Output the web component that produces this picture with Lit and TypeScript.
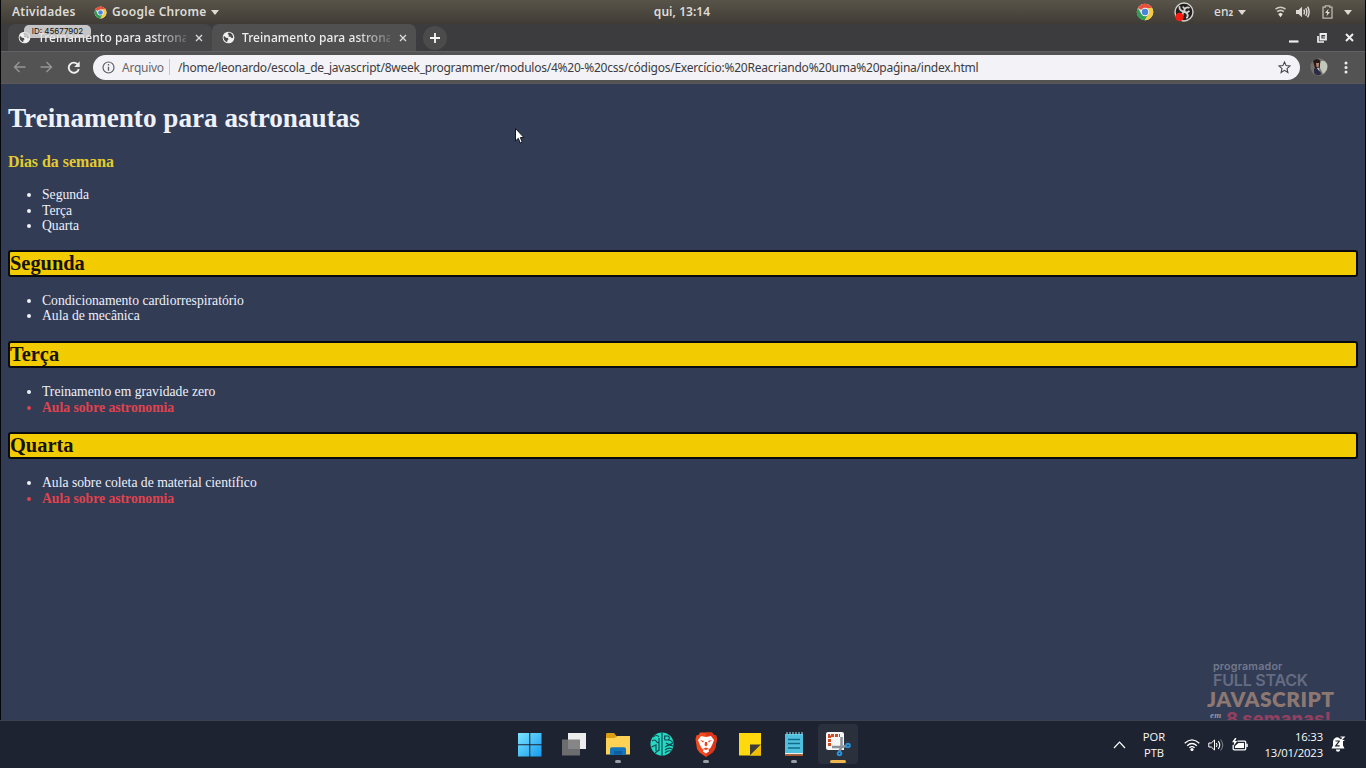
import { LitElement, html, css, svg } from "lit";
import { customElement } from "lit/decorators.js";

const chromeLogo = html`<svg viewBox="0 0 24 24" width="100%" height="100%">
  <circle cx="12" cy="12" r="11" fill="#e4e0d8"/>
  <path d="M12 12 2.5 6.5A11 11 0 0 1 21.5 6.5L12 6.5Z" fill="#e8503c"/>
  <path d="M2.5 6.5A11 11 0 0 0 11.5 23L16.8 14.8 12 12 7.2 14.8Z" fill="#2f9e57"/>
  <path d="M21.5 6.5A11 11 0 0 1 11.5 23L16.8 14.8 12 6.5Z" fill="#f5cb42"/>
  <circle cx="12" cy="12" r="5.6" fill="#f4f4f4"/><circle cx="12" cy="12" r="4.3" fill="#4a84d8"/></svg>`;

const globe = html`<svg viewBox="0 0 14 14" width="13" height="13">
  <circle cx="7" cy="7" r="6.3" fill="#f0f0f0"/>
  <path d="M2 5.2 4.4 7.3 6.4 7.6 7 9 5.8 10.2 5.6 12.2A5.5 5.5 0 0 1 2 5.2ZM7.3 1.6 6 3.2 7.6 4.4 6.8 5.8 9 6.2 10.6 7.8 12 7.2A5.2 5.2 0 0 0 7.3 1.6Z" fill="#4b4b4c"/></svg>`;

const cross = html`<svg viewBox="0 0 8 8" width="8" height="8"><path d="M1 1 7 7M7 1 1 7" stroke="#dcdcdc" stroke-width="1.3"/></svg>`;

const caret = html`<svg viewBox="0 0 8 5" width="8" height="5"><path d="M0 0H8L4 5Z" fill="#dedad3"/></svg>`;

@customElement("desktop-bar")
class DesktopBar extends LitElement {
  static styles = css`
    :host { display: grid; grid-template-columns: 1fr auto 1fr; height: 24px; align-items: center; box-sizing: border-box; padding: 0 13px 1px 11px;
      background: linear-gradient(#59544a, #3f3c36); color: #dedbd5; font: 600 12px/22px "Noto Sans", sans-serif; white-space: nowrap; }
    .left, .right { display: flex; align-items: center; }
    .right { justify-content: flex-end; }
    .act { width: 82px; letter-spacing: 0.25px; }
    .app { width: 99px; margin-left: 5px; letter-spacing: 0.3px; }
    .logo { display: flex; width: 13px; height: 13px; }
    .big { width: 18px; height: 18px; margin-right: 20px; }
    .clock { letter-spacing: 0.05px; }
    .obs { margin-right: 20px; }
    .lang { width: 24px; font-weight: 500; padding-top: 1px; }
    .sub { font-size: 8px; font-weight: 700; }
    .net { margin-left: 29px; }
    .vol { margin-left: 10px; }
    .bat { margin: 0 11px 0 12px; }
    svg { display: block; flex: none; }
  `;
  render() {
    return html`
      <div class="left"><span class="act">Atividades</span><span class="logo">${chromeLogo}</span><span class="app">Google Chrome</span>${caret}</div>
      <span class="clock">qui, 13:14</span>
      <div class="right">
        <span class="logo big">${chromeLogo}</span>
        <svg class="obs" width="20" height="20" viewBox="0 0 20 20"><circle cx="10" cy="10" r="9" fill="#211f20" stroke="#d5d2ce" stroke-width="1.4"/>
          <path d="M5.4 4.2C5 8 8 9.5 10.2 9.4 11.2 7.4 10.3 5.4 8.6 4.8M15.5 6.1C13 4.4 9.8 6.5 10.3 9.4 12 11 14.2 10.5 15.4 8.7M12.3 16.2C15.3 13.8 13.2 10.5 10.3 9.9 8.5 10.5 8 12.4 8.8 14" stroke="#d5d2ce" stroke-width="1.8" fill="none"/>
          <circle cx="5.5" cy="15" r="4.2" fill="#f51c12"/></svg>
        <span class="lang">en<span class="sub">2</span></span>${caret}
        <svg class="net" width="11" height="12" viewBox="0 0 11 12"><path d="M.5 3.2Q5.5-.8 10.5 3.2M2.2 5.7Q5.5 3 8.8 5.7" stroke="#cfcbc3" stroke-width="1.6" fill="none"/><path d="M3.2 8 5.5 6.8 7.8 8 5.5 11.3Z" fill="#ece8e0"/></svg>
        <svg class="vol" width="14" height="12" viewBox="0 0 14 12"><path d="M0 4H2.5L6 .8V11.2L2.5 8H0Z" fill="#dedad3"/><path d="M7.8 3.7Q9.2 6 7.8 8.3M9.7 2.2Q12 6 9.7 9.8M11.6.7Q14.7 6 11.6 11.3" stroke="#dedad3" stroke-width="1.4" fill="none"/></svg>
        <svg class="bat" width="11" height="14" viewBox="0 0 11 14"><path d="M1 2.2H3.3V.8H7.7V2.2H10V13.2H1Z" stroke="#bdb9b1" stroke-width="1.3" fill="none"/><path d="M6.5 3.8 3 8H5.2L4.5 11.2 8 7H5.8Z" fill="#dedad3"/></svg>
        ${caret}
      </div>`;
  }
}

@customElement("browser-chrome")
class BrowserChrome extends LitElement {
  static styles = css`
    :host { display: block; font: 12px/18px "Noto Sans", sans-serif; white-space: nowrap; }
    .strip { height: 27px; box-sizing: border-box; display: flex; padding: 0 11px 0 7px; background: #3c3b3d; align-items: center; }
    .tab { display: flex; align-items: center; width: 204px; height: 27px; box-sizing: border-box; padding: 0 9px 0 10px; border-radius: 7px 7px 0 0; background: #464648; }
    .tab.on { background: #505051; }
    .label { flex: none; width: 148px; margin: 0 9px 0 7px; overflow: hidden; color: #eeeeee; font-weight: 500; letter-spacing: 0.06px;
      -webkit-mask-image: linear-gradient(90deg, #000 78%, #0003 100%); mask-image: linear-gradient(90deg, #000 78%, #0003 100%); }
    .tab svg { flex: none; }
    .plus { display: flex; align-items: center; justify-content: center; width: 24px; height: 24px; border-radius: 50%; background: #4b4b4c; margin-left: 7px; }
    .controls { display: flex; align-items: center; margin-left: auto; gap: 18px; }
    .tools { height: 33px; box-sizing: border-box; display: flex; align-items: center; padding: 0 13px 1px 12px; background: #535354; border-top: 1px solid #626263; border-bottom: 1px solid #5b5a58; }
    .nav { display: flex; gap: 14px; width: 80px; flex: none; align-items: center; }
    .pill { flex: none; display: flex; align-items: center; box-sizing: border-box; width: 1207px; height: 25px; border-radius: 13px; background: #f3f2f6; padding: 0 9px; color: #3c3c40; }
    .kind { width: 47px; margin-left: 7px; padding-top: 1px; color: #666669; letter-spacing: -0.25px; }
    .rule { width: 1px; height: 16px; background: #c7c7ca; margin-right: 8px; }
    .url { padding-top: 1px; letter-spacing: -0.238px; }
    .star { margin-left: auto; }
    .avatar { margin-left: 10px; }
    .more { margin-left: 16px; }
  `;
  render() {
    const label = "Treinamento para astronautas";
    return html`
      <div class="strip">
        <div class="tab">${globe}<span class="label">${label}</span>${cross}</div>
        <div class="tab on">${globe}<span class="label">${label}</span>${cross}</div>
        <span class="plus"><svg width="10" height="10"><path d="M5 0V10M0 5H10" stroke="#f5f5f5" stroke-width="1.8"/></svg></span>
        <div class="controls">
          <svg width="10" height="10"><path d="M0 8.5H9.5" stroke="#eee" stroke-width="2.2"/></svg>
          <svg width="10" height="10"><path d="M1 3V9H7" stroke="#eee" stroke-width="1.7" fill="none"/><path d="M3.5 1H9V6.5H3.5Z" stroke="#eee" stroke-width="1.8" fill="none"/><path d="M5.5 3H8V5H5.5Z" fill="#999"/></svg>
          <svg width="9" height="9"><path d="M1 1 8 8M8 1 1 8" stroke="#eee" stroke-width="2"/></svg>
        </div>
      </div>
      <div class="tools">
        <div class="nav">
          <svg width="13" height="12"><path d="M12.5 6H1.5M6.5 1 1.5 6 6.5 11" stroke="#969697" stroke-width="1.4" fill="none"/></svg>
          <svg width="13" height="12"><path d="M.5 6H11.5M6.5 1 11.5 6 6.5 11" stroke="#969697" stroke-width="1.4" fill="none"/></svg>
          <svg width="13" height="13"><path d="M11 3.7A5.1 5.1 0 1 0 11.8 8" stroke="#efefef" stroke-width="1.9" fill="none"/><path d="M12.7.3V6H7.2Z" fill="#efefef"/></svg>
        </div>
        <div class="pill">
          <svg width="13" height="13" viewBox="0 0 13 13"><circle cx="6.5" cy="6.5" r="5.5" fill="none" stroke="#5f5f63" stroke-width="1.2"/><path d="M6.5 5.8V9.8M6.5 3.1V4.6" stroke="#5f5f63" stroke-width="1.3"/></svg>
          <span class="kind">Arquivo</span><span class="rule"></span>
          <span class="url">/home/leonardo/escola_de_javascript/8week_programmer/modulos/4%20-%20css/códigos/Exercício:%20Reacriando%20uma%20paǵina/index.html</span>
          <svg class="star" width="13" height="13" viewBox="0 0 13 13"><path d="M6.5 1 8.1 4.6 12 5 9 7.6 9.9 11.5 6.5 9.4 3.1 11.5 4 7.6 1 5 4.9 4.6Z" fill="none" stroke="#444448" stroke-width="1.1"/></svg>
        </div>
        <svg class="avatar" width="18" height="18" viewBox="0 0 18 18"><circle cx="9" cy="9" r="8.7" fill="#77706a"/><path d="M10 3Q15 1.5 17 6 18.5 12 13 16L10 10Z" fill="#c3c8bd"/><path d="M3 3Q7-1 10.5 3L9.5 10 5 10Z" fill="#241a19"/><path d="M6 5H9.2L8.6 9H6.5Z" fill="#b3836c"/><path d="M4 10.5 7.2 9.5 11.5 16Q7 19 4 15Z" fill="#282d45"/><path d="M7 10 8.3 9.5 9.7 13.5Z" fill="#e7e8f1"/></svg>
        <svg class="more" width="4" height="13"><circle cx="2" cy="2" r="1.5" fill="#eee"/><circle cx="2" cy="6.5" r="1.5" fill="#eee"/><circle cx="2" cy="11" r="1.5" fill="#eee"/></svg>
      </div>`;
  }
}

interface Day { name: string; items: { text: string; hot?: boolean }[]; }

const days: Day[] = [
  { name: "Segunda", items: [{ text: "Condicionamento cardiorrespiratório" }, { text: "Aula de mecânica" }] },
  { name: "Terça", items: [{ text: "Treinamento em gravidade zero" }, { text: "Aula sobre astronomia", hot: true }] },
  { name: "Quarta", items: [{ text: "Aula sobre coleta de material científico" }, { text: "Aula sobre astronomia", hot: true }] },
];

@customElement("training-page")
class TrainingPage extends LitElement {
  static styles = css`
    :host { display: block; box-sizing: border-box; height: 637px; overflow: hidden; padding: 19.3px 7px 0 7px; background: #323c55; color: #eef0fa; font: 13.65px/15.5px "Liberation Serif", serif; }
    h1 { margin: 0 0 18.3px; font-size: 27.2px; line-height: 31.6px; }
    h3 { margin: 0 0 16px; font-size: 15.9px; line-height: 18px; color: #e3cc2e; }
    ul { margin: 0 0 17px; padding-left: 34px; }
    .days { margin-bottom: 16px; }
    h2 { margin: 0 0 16.3px; box-sizing: border-box; height: 27px; border: 2px solid #080a10; border-radius: 3px; background: #f2cb00; color: #151208; font-size: 20.4px; line-height: 23px; }
    .section { height: 91.1px; }
    .hot { color: #e0424e; font-weight: 700; }
  `;
  render() {
    return html`
      <h1>Treinamento para astronautas</h1>
      <h3>Dias da semana</h3>
      <ul class="days">${days.map((d) => html`<li>${d.name}</li>`)}</ul>
      ${days.map((d) => html`<div class="section"><h2>${d.name}</h2><ul>${d.items.map((i) => html`<li class=${i.hot ? "hot" : ""}>${i.text}</li>`)}</ul></div>`)}`;
  }
}

const apps = [
  { mark: "", art: svg`<defs><linearGradient id="w" x2="1" y2="1"><stop stop-color="#7be5ff"/><stop offset="1" stop-color="#159aef"/></linearGradient></defs><path d="M2 2H13.3V13.3H2ZM14.3 2H25.5V13.3H14.3ZM2 14.3H13.3V25.5H2ZM14.3 14.3H25.5V25.5H14.3Z" fill="url(#w)"/>` },
  { mark: "", art: svg`<path d="M8 2H26V18H8Z" fill="#ededee"/><path d="M2 8.5H20V24.5H2Z" fill="#777" opacity=".88"/>` },
  { mark: "dot", art: svg`<path d="M2 3.2Q2 2 3.2 2H10L12.5 5V9H2Z" fill="#dc9d11"/><path d="M2 7H10.5L13 5H26V23.5H2Z" fill="#ffd155"/><path d="M6 24V18Q6 16.3 8 16.3H20Q22 16.3 22 18V24Z" fill="#1475bc"/><path d="M10 20H18V23.5H10Z" fill="#0d5e9e"/>` },
  { mark: "", art: svg`<circle cx="14" cy="13" r="11.5" fill="#25d9c3"/><path d="M14 1.5V24.5M11 7V20M4 10Q7 8 8 10T11 12M5 6Q9 3 11 6M3.5 16 8 14V20M7 22 11 19M16 5H20Q23 7 20 9H17Q16 7 17 5M20 9Q24 9 24.5 12 22 15 18 12M17 16Q21 13 25 15M17 19Q21 16 24 18M17 22Q20 19 23 20" stroke="#104c55" stroke-width="1.2" fill="none"/>` },
  { mark: "dot", art: svg`<path d="M8 1.5H20L22 4 24 4.2 25 8 23 18 20.5 21.5 14 26 7.5 21.5 5 18 3.5 8 4.5 4.2 6.5 4Z" fill="#f24a1d"/><path d="M14 1.5H20L22 4 24 4.2 25 8 23 18 20.5 21.5 14 26Z" fill="#dc371a"/><path d="M9 5 14 6 19 5 22 9 20.5 13 18.5 17 16.5 18.5 17 20.5 14 22.5 11 20.5 11.5 18.5 9.5 17 7.5 13 6 9Z" fill="#fff"/><path d="M8 9 12 10 11 11.5ZM20 9 16 10 17 11.5ZM13 11H15L15.5 14 14 15.5 12.5 14ZM11 17.8 14 16.5 17 17.8 14 19Z" fill="#ed471e"/>` },
  { mark: "", art: svg`<path d="M3 2H25V24.5H3Z" fill="#fdd90d"/><path d="M14 13.5H25L14 24.5Z" fill="#3f3c36"/><path d="M25 13.5V24.5H14Z" fill="#efbd08"/>` },
  { mark: "dot", art: svg`<path d="M5 3H23V22H5Z" fill="#50c0df"/><path d="M7 1V4M10 1V4M13 1V4M16 1V4M19 1V4M22 1V4" stroke="#a0e4f3"/><path d="M8 8.5H20M8 12.5H20M8 17H20" stroke="#126b89" stroke-width="1.5"/><path d="M5 22H23V23.5H5Z" fill="#f2e9df"/><path d="M5 23.5H23V25H5Z" fill="#aa5521"/>` },
  { mark: "now", art: svg`<path d="M4 1H18Q20 1 20 3V19H4Q2 19 2 17V3Q2 1 4 1Z" fill="#f6f6f6"/><path d="M5.5 15V4.5H16" stroke="#ce4b24" stroke-width="3" stroke-dasharray="3 1" fill="none"/><path d="M17.5 6V16L15.5 20M8 16H18L22 15" stroke="#8b9198" stroke-width="2.5" fill="none"/><circle cx="24" cy="14.5" r="1.8" fill="#202634" stroke="#2794d8" stroke-width="2"/><circle cx="15.5" cy="22.5" r="1.8" fill="#202634" stroke="#2794d8" stroke-width="2"/>` },
];

@customElement("task-bar")
class TaskBar extends LitElement {
  static styles = css`
    :host { display: grid; grid-template-columns: 1fr auto 1fr; height: 48px; box-sizing: border-box; border-top: 1px solid #3b4350; background: #1d2331; color: #fafafa; font: 12px/16px "Open Sans", sans-serif; white-space: nowrap; }
    .apps { grid-column: 2; display: flex; gap: 4px; padding-top: 3px; margin-left: 2px; }
    .app { display: flex; flex-direction: column; align-items: center; width: 40px; height: 40px; box-sizing: border-box; padding-top: 7px; border-radius: 4px; }
    .app.now { background: #2b303d; }
    .mark { height: 3px; width: 6px; border-radius: 2px; margin-top: 1px; }
    .dot .mark { background: #9b9ea5; }
    .now .mark { width: 16px; background: #eeb64c; }
    .tray { display: flex; align-items: center; justify-content: flex-end; padding-right: 20px; }
    .lang { text-align: center; width: 24px; margin: 0 18px 0 16px; font-size: 11.2px; font-weight: 500; }
    .time { text-align: right; width: 60px; margin: 0 8px 0 15px; font-size: 11.3px; font-weight: 500; letter-spacing: -0.15px; display: flex; flex-direction: column; align-items: flex-end; }
    .vol { margin: 0 8px; }
  `;
  render() {
    return html`
      <div class="apps">${apps.map((a) => html`<div class="app ${a.mark}"><svg width="28" height="28" viewBox="0 0 28 28">${a.art}</svg><span class="mark"></span></div>`)}</div>
      <div class="tray">
        <svg width="13" height="8"><path d="M1 7 6.5 1.2 12 7" stroke="#fff" stroke-width="1.2" fill="none"/></svg>
        <span class="lang">POR<br>PTB</span>
        <svg width="16" height="14" viewBox="0 0 16 14"><path d="M.7 5.2Q8-1.5 15.3 5.2M3.2 7.7Q8 3.2 12.8 7.7M5.4 9.8Q8 7.5 10.6 9.8" stroke="#fff" stroke-width="1.3" fill="none"/><circle cx="8" cy="11.5" r="1.6" fill="#fff"/></svg>
        <svg class="vol" width="16" height="14" viewBox="0 0 16 14"><path d="M.8 5H3.3L6.5 2V12L3.3 9H.8Z" stroke="#fff" fill="none"/><path d="M8.3 5Q9.8 7 8.3 9M10.3 3.2Q13.2 7 10.3 10.8" stroke="#fff" stroke-width="1.1" fill="none"/><path d="M12.5 1.5Q17 7 12.5 12.5" stroke="#747985" stroke-width="1.1" fill="none"/></svg>
        <svg width="16" height="14" viewBox="0 0 16 14"><path d="M5.5 3.2H12.8Q13.7 3.2 13.7 4.2V10.7Q13.7 11.8 12.8 11.8H2.3Q1.2 11.8 1.2 10.7V7" stroke="#fff" stroke-width="1.3" fill="none"/><path d="M6.5 5H12V10H3V8Z" fill="#fff"/><path d="M15 5.8V9" stroke="#fff" stroke-width="1.5"/><path d="M3 0 0 4.3H2.2L1.5 8 5.3 3H3.1L4.5 0Z" fill="#fff"/></svg>
        <span class="time"><span>16:33</span><span>13/01/2023</span></span>
        <svg width="15" height="17" viewBox="0 0 15 17"><path d="M2 5.5Q2.5 1.5 7 1.3L12 5V9.5L13.5 12.5H.5L2 9.5Z" fill="#fff"/><path d="M4.8 13.5H9.2Q9 15.8 7 15.8T4.8 13.5Z" fill="#fff"/><path d="M4.5 5H8.3L4.7 9.8H8.7" stroke="#1d2331" stroke-width="1.2" fill="none"/><path d="M9.5 1H13L9.7 4.5H13.3" stroke="#fff" stroke-width="1.2" fill="none"/></svg>
      </div>`;
  }
}

@customElement("app-root")
class AppRoot extends LitElement {
  static styles = css`
    :host { display: block; position: relative; width: 1366px; height: 768px; overflow: hidden; background: #050608; }
    .screen { margin: 0 1px; height: 720px; overflow: hidden; }
    .id { position: absolute; left: 24px; top: 25px; width: 67px; height: 13px; border-radius: 5px; background: rgba(226, 226, 226, 0.82); color: #111; font: 8px/12px Inter, sans-serif; text-align: center; white-space: nowrap; }
    .cursor { position: absolute; left: 514px; top: 127px; }
    .brand { position: absolute; left: 1207px; top: 660px; width: 145px; height: 60px; overflow: hidden; white-space: nowrap; display: flex; flex-direction: column; }
    .b1 { font: 600 10.7px/13px Inter, sans-serif; color: #73788b; padding-left: 6px; letter-spacing: 0.2px; }
    .b2 { font: 600 16px/15px Inter, sans-serif; color: #656c82; padding-left: 6px; letter-spacing: -0.2px; }
    .b3 { font: 800 21px/21px Lato, sans-serif; color: #8c7771; letter-spacing: 0.45px; }
    .b4 { display: flex; font: 800 18px/20px Inter, sans-serif; color: #91405f; letter-spacing: 0.2px; }
    .em { font: italic 700 9px/12px "Liberation Serif", serif; color: #9295a6; width: 19px; padding-left: 3px; box-sizing: border-box; }
  `;
  render() {
    return html`
      <div class="screen"><desktop-bar></desktop-bar><browser-chrome></browser-chrome><training-page></training-page></div>
      <task-bar></task-bar>
      <div class="id">ID: 45677902</div>
      <svg class="cursor" width="12" height="18"><path d="M1.5 1.5V14L4.3 11.3 6.2 16 8.3 15.2 6.4 10.6H10Z" fill="#fff" stroke="#111522"/></svg>
      <div class="brand"><span class="b1">programador</span><span class="b2">FULL STACK</span><span class="b3">JAVASCRIPT</span><span class="b4"><span class="em">em</span>8 semanas!</span></div>`;
  }
}
